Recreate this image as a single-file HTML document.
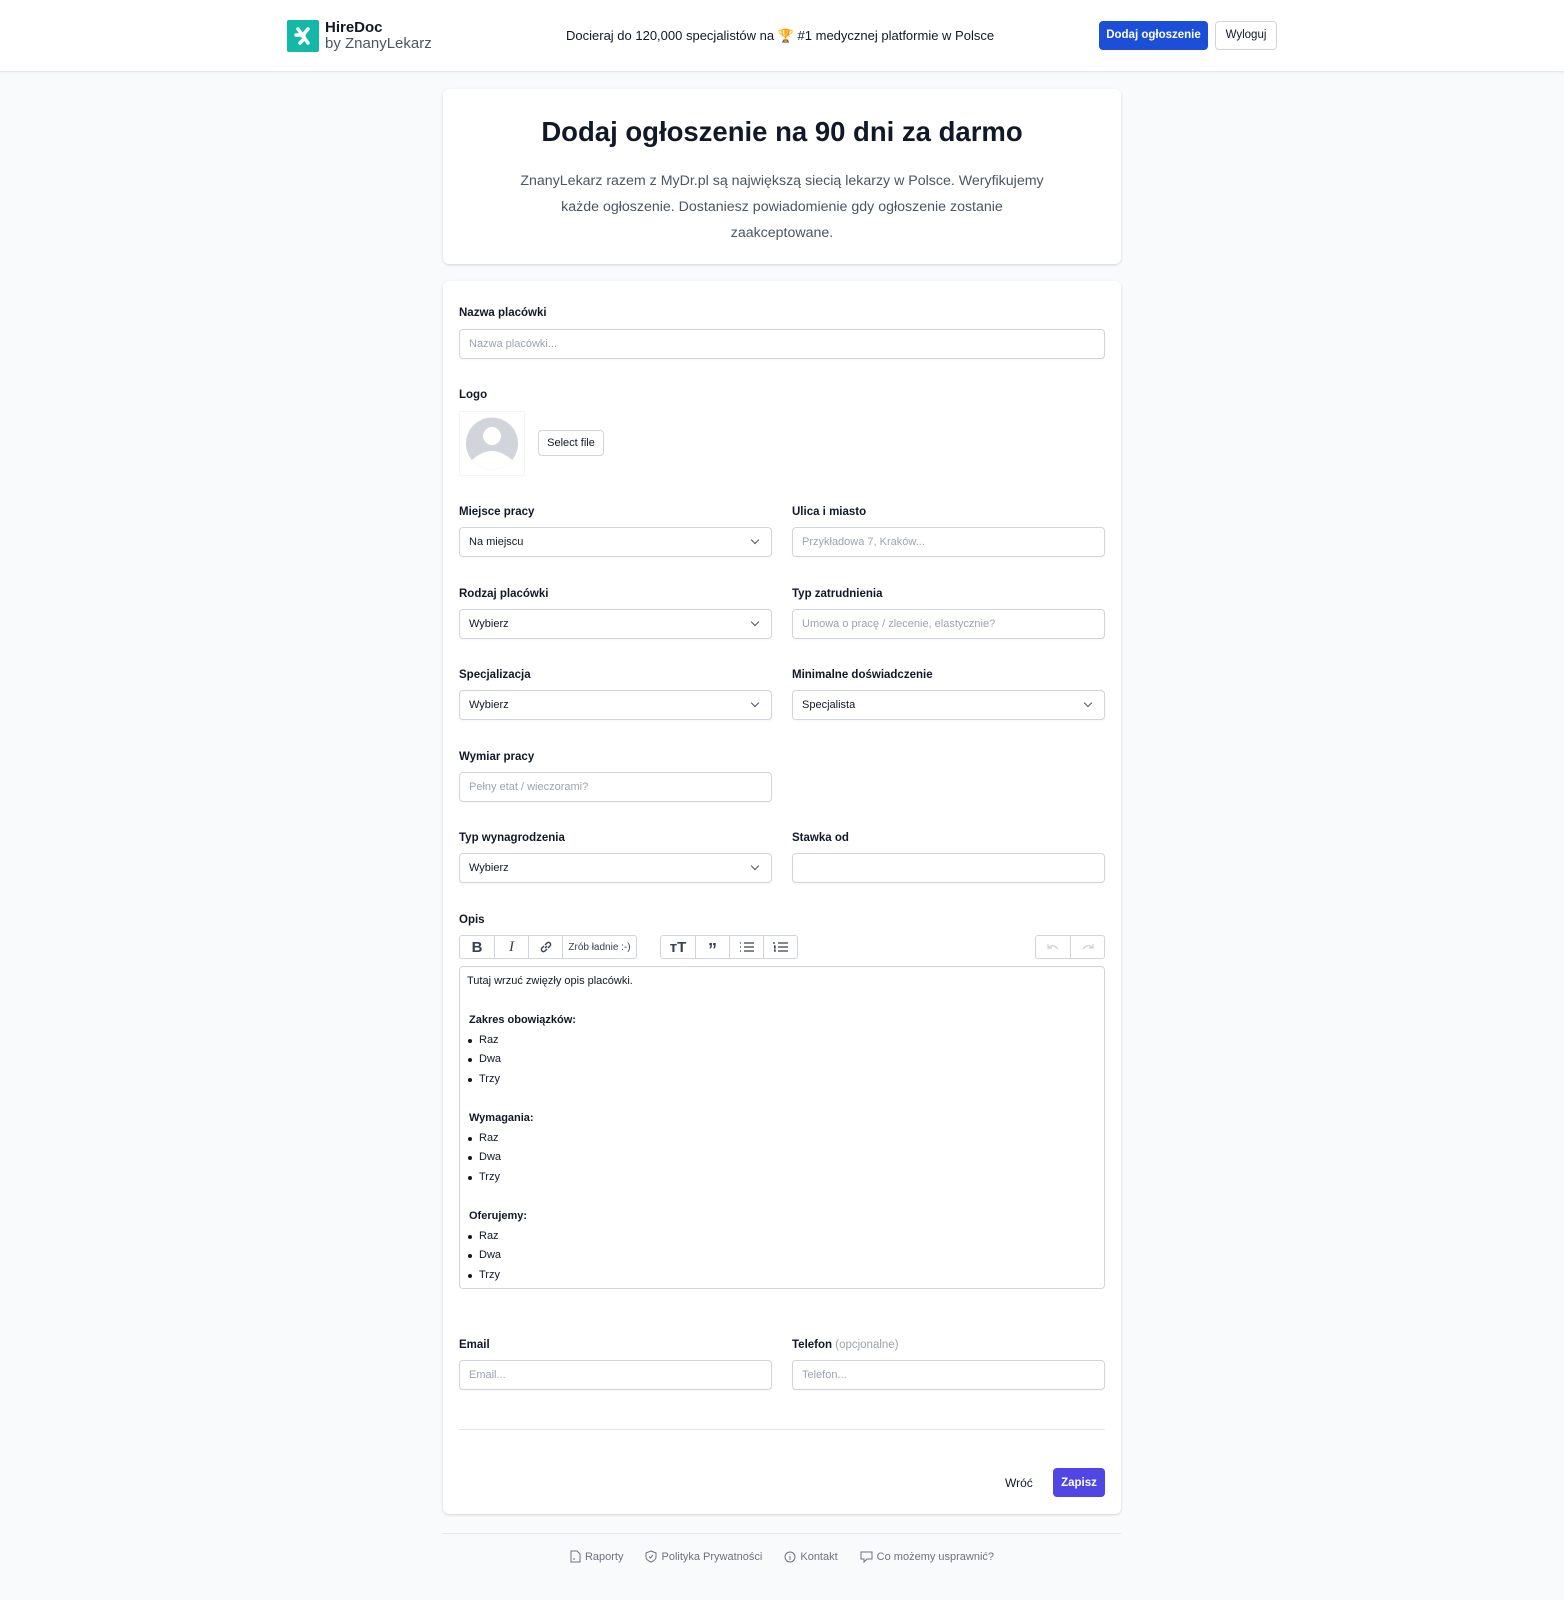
<!DOCTYPE html>
<html><head><meta charset="utf-8">
<style>
*{box-sizing:border-box;margin:0;padding:0}
body{width:1564px;height:1600px;background:#f9fafb;font-family:"Liberation Sans",sans-serif;color:#111827;position:relative;overflow:hidden}
.abs{position:absolute}
.hdr{left:0;top:0;width:1564px;height:72px;background:#fff;border-bottom:1px solid #e5e7eb;box-shadow:0 1px 2px rgba(0,0,0,.05)}
.card{background:#fff;border-radius:6px;box-shadow:0 1px 3px rgba(0,0,0,.1),0 1px 2px rgba(0,0,0,.06)}
.lbl{font-size:11.5px;font-weight:bold;color:#111827}
.inp{height:30px;border:1px solid #d1d5db;border-radius:4px;background:#fff;font-size:11px;color:#9ca3af;padding:0 9px;line-height:29px;box-shadow:0 1px 2px rgba(0,0,0,.04)}
.sel{color:#111827}
.sel::after{content:"";position:absolute;right:13px;top:9px;width:5px;height:5px;border-right:1.5px solid #4b5563;border-bottom:1.5px solid #4b5563;transform:rotate(45deg)}
.tb{height:24px;border:1px solid #d1d5db;border-radius:3px;display:flex;background:#fff}
.tb div{border-right:1px solid #d1d5db;height:100%;display:flex;align-items:center;justify-content:center;font-size:10px;color:#374151}
.tb div:last-child{border-right:none}
.ed{font-size:11px;color:#111827}
.ed div{position:absolute;left:0;white-space:nowrap}
.ed .li{left:12px}
.ed .li::before{content:"";position:absolute;left:-11px;top:5px;width:4px;height:4px;border-radius:50%;background:#111827}
.ft{font-size:11px;color:#6b7280;display:flex;align-items:center;gap:4px}
</style></head><body>
<div class="abs hdr"></div>
<div class="abs" style="left:287px;top:20px;width:32px;height:32px;background:#14b8a6;border-radius:2px">
<svg width="32" height="32" viewBox="0 0 32 32"><path d="M11 9 L21 23 M21 9 L15 16 M9 15 L17 15 M13 23 L16 20" stroke="#fff" stroke-width="3.5" stroke-linecap="round" fill="none"/></svg></div>
<div class="abs" style="left:325px;top:19px;font-size:15px;font-weight:bold;color:#111827">HireDoc</div>
<div class="abs" style="left:325px;top:35px;font-size:15px;color:#4b5563">by ZnanyLekarz</div>
<div class="abs" style="left:566px;top:28px;font-size:13px;color:#111827">Docieraj do 120,000 specjalistów na 🏆 #1 medycznej platformie w Polsce</div>
<div class="abs" style="left:1099px;top:21px;width:109px;height:29px;background:#1d4ed8;border-radius:4px;color:#fff;font-size:11.5px;font-weight:bold;text-align:center;line-height:29px">Dodaj ogłoszenie</div>
<div class="abs" style="left:1215px;top:21px;width:62px;height:29px;background:#fff;border:1px solid #d1d5db;border-radius:4px;font-size:11.5px;text-align:center;line-height:27px">Wyloguj</div>

<div class="abs card" style="left:443px;top:89px;width:678px;height:175px"></div>
<div class="abs" style="left:443px;top:116px;width:678px;text-align:center;font-size:27.5px;font-weight:bold">Dodaj ogłoszenie na 90 dni za darmo</div>
<div class="abs" style="left:510px;top:168px;width:544px;text-align:center;font-size:14.2px;line-height:26px;color:#4b5563">ZnanyLekarz razem z MyDr.pl są największą siecią lekarzy w Polsce. Weryfikujemy każde ogłoszenie. Dostaniesz powiadomienie gdy ogłoszenie zostanie zaakceptowane.</div>

<div class="abs card" style="left:443px;top:281px;width:678px;height:1233px"></div>

<div class="abs lbl" style="left:459px;top:307px">Nazwa placówki</div>
<div class="abs inp" style="left:459px;top:329px;width:646px">Nazwa placówki...</div>

<div class="abs lbl" style="left:459px;top:389px">Logo</div>
<div class="abs" style="left:459px;top:411px;width:66px;height:65px;border:1px solid #f3f4f6">
<svg width="64" height="63" viewBox="0 0 64 63"><circle cx="32" cy="31.5" r="26" fill="#d1d5db"/><circle cx="32" cy="24" r="9" fill="#fff"/><path d="M12 48 Q32 30 52 48 A26 26 0 0 1 12 48Z" fill="#fff"/></svg></div>
<div class="abs" style="left:538px;top:430px;width:66px;height:26px;border:1px solid #d1d5db;border-radius:4px;font-size:11px;text-align:center;line-height:25px;color:#111827">Select file</div>

<div class="abs lbl" style="left:459px;top:506px">Miejsce pracy</div>
<div class="abs inp sel" style="left:459px;top:527px;width:313px">Na miejscu</div>
<div class="abs lbl" style="left:792px;top:506px">Ulica i miasto</div>
<div class="abs inp" style="left:792px;top:527px;width:313px">Przykładowa 7, Kraków...</div>

<div class="abs lbl" style="left:459px;top:588px">Rodzaj placówki</div>
<div class="abs inp sel" style="left:459px;top:609px;width:313px">Wybierz</div>
<div class="abs lbl" style="left:792px;top:588px">Typ zatrudnienia</div>
<div class="abs inp" style="left:792px;top:609px;width:313px">Umowa o pracę / zlecenie, elastycznie?</div>

<div class="abs lbl" style="left:459px;top:669px">Specjalizacja</div>
<div class="abs inp sel" style="left:459px;top:690px;width:313px">Wybierz</div>
<div class="abs lbl" style="left:792px;top:669px">Minimalne doświadczenie</div>
<div class="abs inp sel" style="left:792px;top:690px;width:313px">Specjalista</div>

<div class="abs lbl" style="left:459px;top:751px">Wymiar pracy</div>
<div class="abs inp" style="left:459px;top:772px;width:313px">Pełny etat / wieczorami?</div>

<div class="abs lbl" style="left:459px;top:832px">Typ wynagrodzenia</div>
<div class="abs inp sel" style="left:459px;top:853px;width:313px">Wybierz</div>
<div class="abs lbl" style="left:792px;top:832px">Stawka od</div>
<div class="abs inp" style="left:792px;top:853px;width:313px"></div>

<div class="abs lbl" style="left:459px;top:914px">Opis</div>
<div class="abs tb" style="left:459px;top:935px;width:178px">
<div style="width:35px;font-weight:bold;font-size:15px">B</div>
<div style="width:34px;font-style:italic;font-size:15px;font-family:'Liberation Serif',serif">I</div>
<div style="width:34px"><svg width="14" height="14" viewBox="0 0 14 14" fill="none" stroke="#374151" stroke-width="1.4"><path d="M6 8 L8 6 M5 6 L3 8 A2 2 0 0 0 6 11 L8 9 M9 8 L11 6 A2 2 0 0 0 8 3 L6 5"/></svg></div>
<div style="flex:1">Zrób ładnie :-)</div></div>
<div class="abs tb" style="left:660px;top:935px;width:138px">
<div style="width:35px;font-weight:bold;font-size:15px">ᴛT</div>
<div style="width:34px;font-weight:bold;font-size:18px;padding-top:6px">”</div>
<div style="width:34px"><svg width="16" height="12" viewBox="0 0 16 12" stroke="#374151" stroke-width="1.3"><path d="M5 2H15M5 6H15M5 10H15M1 2H2M1 6H2M1 10H2"/></svg></div>
<div style="flex:1"><svg width="16" height="12" viewBox="0 0 16 12" stroke="#374151" stroke-width="1.3"><path d="M5 2H15M5 6H15M5 10H15M1 1V3M1 5H2V7H1M1 9H2V11"/></svg></div></div>
<div class="abs tb" style="left:1035px;top:935px;width:70px">
<div style="width:35px"><svg width="14" height="10" viewBox="0 0 14 10" fill="none" stroke="#d1d5db" stroke-width="1.4"><path d="M2 2V6H6M2 6 Q7 1 12 7"/></svg></div>
<div style="flex:1"><svg width="14" height="10" viewBox="0 0 14 10" fill="none" stroke="#d1d5db" stroke-width="1.4"><path d="M12 2V6H8M12 6 Q7 1 2 7"/></svg></div></div>

<div class="abs" style="left:459px;top:966px;width:646px;height:323px;border:1px solid #d1d5db;border-radius:4px;background:#fff"></div>
<div class="abs ed" style="left:467px;top:975px;width:620px;height:300px">
<div style="top:0">Tutaj wrzuć zwięzły opis placówki.</div>
<div style="top:39px;left:2px;font-weight:bold">Zakres obowiązków:</div>
<div class="li" style="top:59px">Raz</div>
<div class="li" style="top:78px">Dwa</div>
<div class="li" style="top:98px">Trzy</div>
<div style="top:137px;left:2px;font-weight:bold">Wymagania:</div>
<div class="li" style="top:157px">Raz</div>
<div class="li" style="top:176px">Dwa</div>
<div class="li" style="top:196px">Trzy</div>
<div style="top:235px;left:2px;font-weight:bold">Oferujemy:</div>
<div class="li" style="top:255px">Raz</div>
<div class="li" style="top:274px">Dwa</div>
<div class="li" style="top:294px">Trzy</div>
</div>

<div class="abs lbl" style="left:459px;top:1339px">Email</div>
<div class="abs inp" style="left:459px;top:1360px;width:313px">Email...</div>
<div class="abs lbl" style="left:792px;top:1339px">Telefon <span style="font-weight:normal;color:#9ca3af">(opcjonalne)</span></div>
<div class="abs inp" style="left:792px;top:1360px;width:313px">Telefon...</div>

<div class="abs" style="left:459px;top:1429px;width:646px;height:1px;background:#e5e7eb"></div>
<div class="abs" style="left:1005px;top:1476px;font-size:12px">Wróć</div>
<div class="abs" style="left:1053px;top:1468px;width:52px;height:29px;background:#4f46e5;border-radius:4px;color:#fff;font-size:11.5px;font-weight:bold;text-align:center;line-height:30px">Zapisz</div>

<div class="abs" style="left:443px;top:1533px;width:678px;height:1px;background:#e5e7eb"></div>
<div class="abs" style="left:443px;top:1550px;width:678px;display:flex;justify-content:center;gap:22px">
<div class="ft"><svg width="11" height="13" viewBox="0 0 11 13" fill="none" stroke="#6b7280"><path d="M1 1H7L10 4V12H1Z M3 9H5"/></svg>Raporty</div>
<div class="ft"><svg width="12" height="13" viewBox="0 0 12 13" fill="none" stroke="#6b7280"><path d="M6 1L11 3V7Q11 10 6 12Q1 10 1 7V3Z M4 6.5L5.5 8L8 5"/></svg>Polityka Prywatności</div>
<div class="ft"><svg width="12" height="12" viewBox="0 0 12 12" fill="none" stroke="#6b7280"><circle cx="6" cy="6" r="5"/><path d="M6 5V9M6 3.2V3.8"/></svg>Kontakt</div>
<div class="ft"><svg width="13" height="12" viewBox="0 0 13 12" fill="none" stroke="#6b7280"><path d="M1 1H12V8H7L4 11V8H1Z"/></svg>Co możemy usprawnić?</div>
</div>
</body></html>
